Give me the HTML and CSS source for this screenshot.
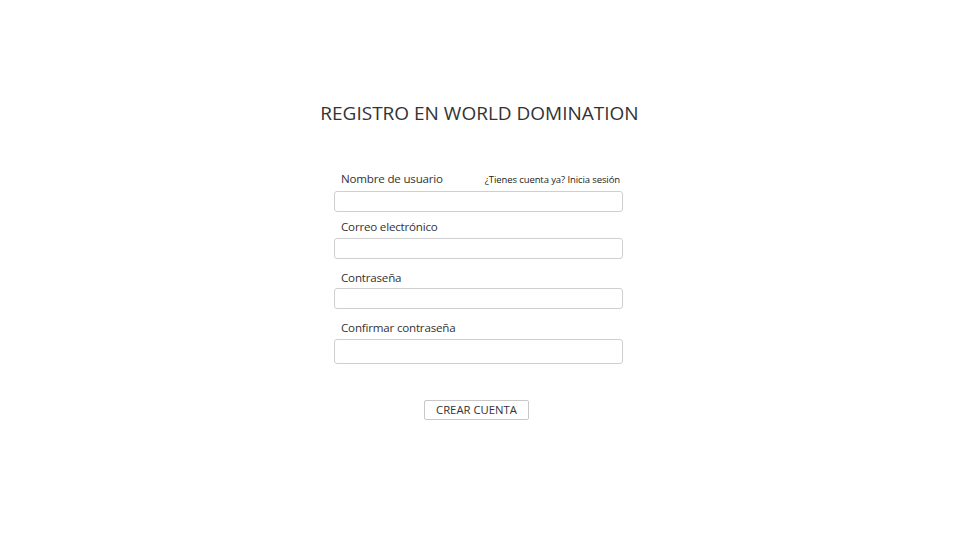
FILE: index.html
```html
<!DOCTYPE html>
<html lang="es">
<head>
<meta charset="utf-8">
<title>Registro</title>
<link rel="stylesheet" href="styles.css">
</head>
<body>
<main class="page">
  <h1 class="title">REGISTRO EN WORLD DOMINATION</h1>
  <form class="form">
    <div class="field">
      <div class="label-row">
        <label class="label" for="u">Nombre de usuario</label>
        <a class="login-link" href="#">¿Tienes cuenta ya? Inicia sesión</a>
      </div>
      <input class="input" id="u" type="text">
    </div>
    <div class="field field-email">
      <label class="label" for="e">Correo electrónico</label>
      <input class="input" id="e" type="email">
    </div>
    <div class="field field-pass">
      <label class="label" for="p">Contraseña</label>
      <input class="input" id="p" type="password">
    </div>
    <div class="field field-confirm">
      <label class="label" for="c">Confirmar contraseña</label>
      <input class="input input-tall" id="c" type="password">
    </div>
    <div class="actions">
      <button class="button" type="button">CREAR CUENTA</button>
    </div>
  </form>
</main>
</body>
</html>
```
FILE: styles.css
```css
html, body {
  margin: 0;
  padding: 0;
  background: #ffffff;
}
body {
  font-family: "Open Sans", "Noto Sans", sans-serif;
  color: #333333;
}
.page {
  display: flex;
  flex-direction: column;
  align-items: center;
  padding-top: 100px;
  padding-right: 2px;
}
.title {
  margin: 0 0 0 2px;
  font-size: 19px;
  font-weight: 400;
  line-height: 26px;
  color: #333333;
}
.form {
  width: 289px;
  margin-top: 44px;
  display: flex;
  flex-direction: column;
}
.field {
  display: flex;
  flex-direction: column;
}
.label-row {
  display: flex;
  justify-content: space-between;
  align-items: baseline;
  padding-right: 3px;
}
.label {
  font-size: 11.6px;
  letter-spacing: -0.2px;
  line-height: 18px;
  padding-left: 7px;
  color: #333333;
  margin-bottom: 3px;
}
.login-link {
  font-size: 9.5px;
  color: #222222;
  text-decoration: none;
  letter-spacing: -0.1px;
}
.input {
  box-sizing: border-box;
  height: 21px;
  width: 100%;
  margin: 0;
  border: 1px solid #cfcfcf;
  border-radius: 3px;
  background: #fff;
  outline: none;
}
.input-tall {
  height: 25px;
}
.field-email {
  margin-top: 6px;
}
.field-email .label {
  margin-bottom: 2px;
}
.field-pass {
  margin-top: 10px;
}
.field-pass .label {
  margin-bottom: 1px;
}
.field-confirm {
  margin-top: 10px;
}
.field-confirm .label {
  margin-bottom: 2px;
}
.actions {
  display: flex;
  justify-content: center;
  margin-top: 36px;
  padding-right: 4px;
}
.button {
  font-family: "Open Sans", "Noto Sans", sans-serif;
  font-size: 11.3px;
  color: #333333;
  background: #ffffff;
  border: 1px solid #c8c8c8;
  border-radius: 2px;
  height: 20px;
  padding: 0 11px;
  line-height: 18px;
}
```
